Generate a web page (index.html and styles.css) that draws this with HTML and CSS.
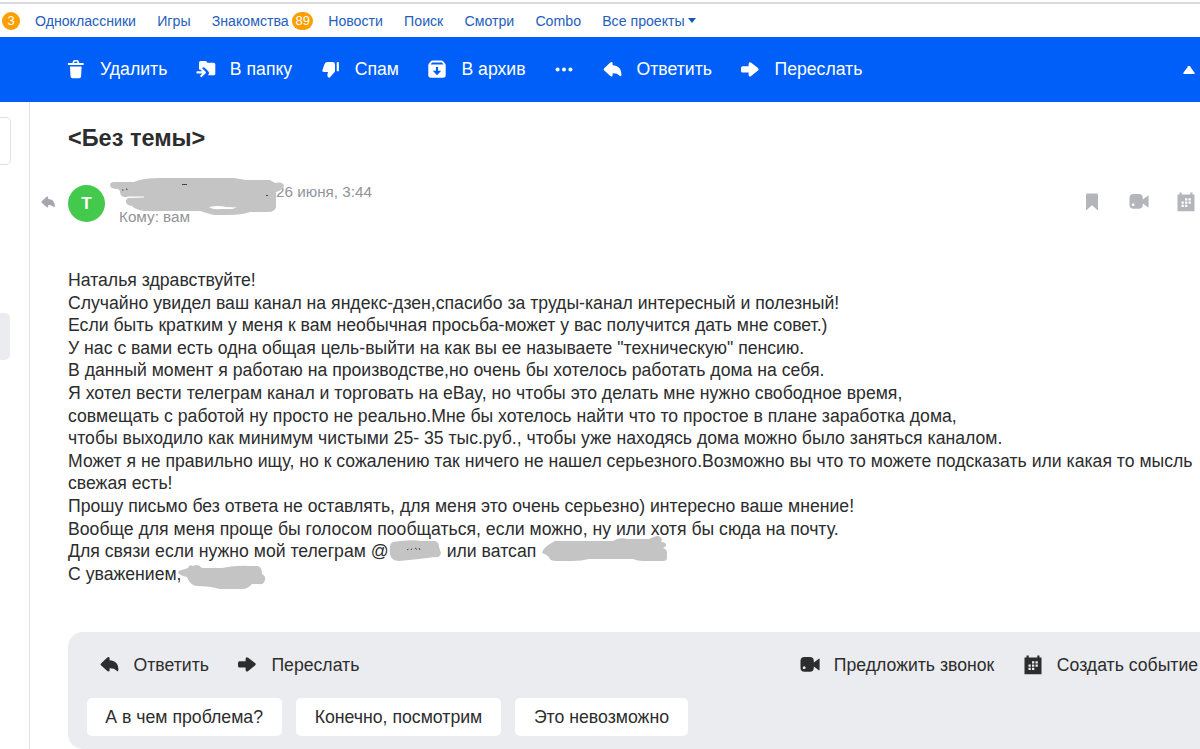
FILE: index.html
```html
<!DOCTYPE html>
<html lang="ru">
<head>
  <meta charset="UTF-8">
  <meta name="viewport" content="width=device-width, initial-scale=1.0">
  <title>Почта</title>
  <link rel="stylesheet" href="styles.css">
</head>
<body>
  <!-- icon set -->
  <svg class="sprite" width="0" height="0">
    <symbol id="i-trash" viewBox="0 0 20 20">
      <path d="M6.500 3Q6.500 0 9 0h1.600q2.500 0 2.500 3h4q.6 0 .6.6v.9q0 .6-.6.600H2.500q-.6 0-.6-.6v-.9q0-.6.600-.6zM8.200 3h3.200q0-1.400-.9-1.400H9.100q-.9 0-.9 1.400zM4 6.500h11.600l-.5 9.800q-.1 1.900-2 1.900H6.500q-1.900 0-2-1.900z" fill-rule="evenodd"/>
    </symbol>
    <symbol id="i-folder" viewBox="0 0 20 20">
      <path d="M3 6V2.800Q3 1 4.800 1h4.500q1 0 1.500.8l.6.900h6.300q1.600 0 1.600 1.600v9.400q0 1.600-1.600 1.600h-6l.8-.9q1.300-1.400 0-2.800L8.700 7.800Q7.500 6.700 6.600 7.600q-.6.800-.1 1.800H3z"/>
      <path d="M1.400 12.400h7M5.300 8.900l3.600 3.500-3.600 3.700" fill="none" stroke="currentColor" stroke-width="2.100" stroke-linecap="round" stroke-linejoin="round"/>
    </symbol>
    <symbol id="i-spam" viewBox="0 0 20 20">
      <path d="M6.500 2h5.200q2.300 0 2.300 2.300v6.400q0 1-.8 1.700l-4.400 5q-.6.600-1.300 0-1.600-1-1.100-3.200l.6-2.200H3q-2.300 0-1.500-2.200l2-5.600Q4.200 2 6.500 2z"/>
      <rect x="15.700" y="2" width="2.200" height="9.300" rx=".9"/>
    </symbol>
    <symbol id="i-archive" viewBox="0 0 20 20">
      <path d="M6 .5h8q1.500 0 2.300 1l1.500 1.700q.9 1 .9 2.300v9.500q0 2.700-2.700 2.700H4q-2.700 0-2.700-2.700V5.500q0-1.300.9-2.300l1.500-1.700Q4.500.5 6 .5zM5.200 2.500L3.600 4.500h12.800l-1.600-2zM8.900 7v3.800H5.800L10 15.200l4.200-4.400h-3.100V7z" fill-rule="evenodd"/>
    </symbol>
    <symbol id="i-dots" viewBox="0 0 20 20">
      <circle cx="3.600" cy="9.500" r="2"/><circle cx="10" cy="9.500" r="2"/><circle cx="16.400" cy="9.500" r="2"/>
    </symbol>
    <symbol id="i-reply" viewBox="0 0 20 20">
      <path d="M1 8.400L7 2.800Q9.300 1.200 9.600 3.200V5.200C15 5.400 18.400 8.600 18.400 14.400Q18.300 17.300 16.700 15.700Q14.400 13.200 9.600 13.300V15.400Q9.300 17.500 7 15.800L1 10.300Q0 9.300 1 8.400z"/>
    </symbol>
    <symbol id="i-forward" viewBox="0 0 20 20">
      <path d="M2.500 6.200H8.600V3.800Q9 1.300 11.200 2.800L18 8.100Q19.500 9.300 18 10.500L11.200 15.900Q9 17.300 8.600 14.900V12.600H2.500Q1 12.600 1 11.100V7.700Q1 6.200 2.500 6.200z"/>
    </symbol>
    <symbol id="i-bookmark" viewBox="0 0 20 20">
      <path d="M5.400 1.500h9.200q1.400 0 1.400 1.400v14.500q0 1-.9.400L10 13.300l-5.100 4.500q-.9.600-.9-.4V2.900q0-1.400 1.400-1.400z"/>
    </symbol>
    <symbol id="i-video" viewBox="0 0 20 20">
      <path d="M4.500 2h5.300q4 0 4 4v1.600L18.500 3.900q1.100-.8 1.100.5v10.200q0 1.300-1.100.5l-4.700-3.700v1.400q0 4-4 4H4.500q-4 0-4-4V6q0-4 4-4zM4.200 11.300a1.400 1.400 0 1 0 .01 0z" fill-rule="evenodd"/>
    </symbol>
    <symbol id="i-calendar" viewBox="0 0 20 20">
      <path d="M3.500.5h2.200v2h8.600v-2h2.200v2h2v16.700h-17V2.500h2zM9 6.200v2.300h2.300V6.200zM12.500 6.200v2.300h2.300V6.200zM5.500 9.500v2.300h2.300V9.500zM9 9.500v2.300h2.300V9.500zM12.500 9.500v2.300h2.300V9.500zM5.500 12.800v2.300h2.300v-2.300zM9 12.800v2.300h2.300v-2.300z" fill-rule="evenodd"/>
    </symbol>
  </svg>

  <nav class="projects">
    <span class="badge">3</span>
    <a class="p-ok">Одноклассники</a>
    <a class="p-games">Игры</a>
    <a class="p-love">Знакомства</a><span class="badge badge-wide">89</span>
    <a class="p-news">Новости</a>
    <a class="p-search">Поиск</a>
    <a class="p-watch">Смотри</a>
    <a class="p-combo">Combo</a>
    <a class="p-all">Все проекты</a><span class="caret"></span>
  </nav>

  <header class="toolbar">
    <a class="action"><svg class="icon"><use href="#i-trash"/></svg><span>Удалить</span></a>
    <a class="action"><svg class="icon"><use href="#i-folder"/></svg><span>В папку</span></a>
    <a class="action"><svg class="icon"><use href="#i-spam"/></svg><span>Спам</span></a>
    <a class="action"><svg class="icon"><use href="#i-archive"/></svg><span>В архив</span></a>
    <a class="action"><svg class="icon"><use href="#i-dots"/></svg></a>
    <a class="action"><svg class="icon"><use href="#i-reply"/></svg><span>Ответить</span></a>
    <a class="action"><svg class="icon"><use href="#i-forward"/></svg><span>Переслать</span></a>
    <svg class="collapse" viewBox="0 0 12 10"><path d="M1 9Q-.3 9 .6 7.600L5.200 1.300Q6 .4 6.800 1.300l4.600 6.300Q12.300 9 11 9z"/></svg>
  </header>

  <div class="layout">
    <aside class="sidebar">
      <div class="compose"></div>
      <div class="folder-active"></div>
    </aside>

    <main class="letter">
      <h1>&lt;Без темы&gt;</h1>

      <div class="letter-head">
        <svg class="icon replied" viewBox="0 0 20 20"><use href="#i-reply"/></svg>
        <div class="avatar">Т</div>
        <div class="sender">
          <div class="date">26 июня, 3:44</div>
          <div class="to">Кому: вам</div>
          <svg class="smudge smudge-name" viewBox="0 0 176 42">
            <path d="M4 5H24Q32 1 50 1H124L136 3H160L165 6Q173 4 174 9Q173 13 166 15V30Q165 35 158 35H140Q132 38 118 38H104Q96 36 90 34H34Q24 32 22 29Q15 28 16 23L19 20H14Q10 19 10 14L8 12Q0 12 0 8Q0 5 4 5z"/>
            <path class="gap" d="M17 19.500H34V20.500L19 21zM99 30Q110 28 116 30L127 30.500L122 32H110Q103 33 99 30z"/>
            <path class="ink" d="M12 13h1.500M16 12h1v1M72 7.500h5M156 18.500h2"/>
          </svg>
        </div>
        <div class="letter-tools">
          <svg class="icon"><use href="#i-bookmark"/></svg>
          <svg class="icon"><use href="#i-video"/></svg>
          <svg class="icon"><use href="#i-calendar"/></svg>
        </div>
      </div>

      <div class="letter-body">
        <p>Наталья здравствуйте!</p>
        <p>Случайно увидел ваш канал на яндекс-дзен,спасибо за труды-канал интересный и полезный!</p>
        <p>Если быть кратким у меня к вам необычная просьба-может у вас получится дать мне совет.)</p>
        <p>У нас с вами есть одна общая цель-выйти на как вы ее называете "техническую" пенсию.</p>
        <p>В данный момент я работаю на производстве,но очень бы хотелось работать дома на себя.</p>
        <p>Я хотел вести телеграм канал и торговать на eBay, но чтобы это делать мне нужно свободное время,</p>
        <p>совмещать с работой ну просто не реально.Мне бы хотелось найти что то простое в плане заработка дома,</p>
        <p>чтобы выходило как минимум чистыми 25- 35 тыс.руб., чтобы уже находясь дома можно было заняться каналом.</p>
        <p>Может я не правильно ищу, но к сожалению так ничего не нашел серьезного.Возможно вы что то можете подсказать или какая то мысль<br>свежая есть!</p>
        <p>Прошу письмо без ответа не оставлять, для меня это очень серьезно) интересно ваше мнение!</p>
        <p>Вообще для меня проще бы голосом пообщаться, если можно, ну или хотя бы сюда на почту.</p>
        <p class="contacts">Для связи если нужно мой телеграм @<span class="hidden-nick"><svg class="smudge smudge-nick" viewBox="0 0 54 22"><path d="M4 2Q22 -1 32 1L46 1Q50 2 50 7L52 13Q51 18 46 17Q38 18 30 19L10 21Q2 21 1 14Q0 3 4 2z"/><path class="ink" d="M18 10l1.500-1M22 10l1-1.500M26 8l2 1.500M30 8l1 2"/></svg></span>или ватсап<span class="hidden-phone"><svg class="smudge smudge-phone" viewBox="0 0 128 28"><path d="M1 17Q2 11 14 5H72Q78 1 86 3H108Q112 1 116 0Q120 0 121 4L120 6Q126 6 125 10L122 12Q126 13 126 17V22Q126 25 122 25H102Q96 25 92 23H48Q40 25 32 25H16Q8 25 8 21Q5 18 1 17z"/></svg></span></p>
        <p class="sign">С уважением,<svg class="smudge smudge-sign" viewBox="0 0 88 26"><path d="M4 6L10 4Q11 0 15 2Q20 -1 24 4L44 4Q58 1 72 2H80Q84 3 84 10Q88 12 87 16Q86 21 81 20H74Q70 25 64 25H42Q32 22 18 22Q12 21 9 13Q0 11 0 8Q1 6 4 6z"/></svg></p>
      </div>

      <section class="reply-box">
        <div class="reply-actions">
          <a class="action"><svg class="icon"><use href="#i-reply"/></svg><span>Ответить</span></a>
          <a class="action"><svg class="icon"><use href="#i-forward"/></svg><span>Переслать</span></a>
          <a class="action offer-call"><svg class="icon"><use href="#i-video"/></svg><span>Предложить звонок</span></a>
          <a class="action"><svg class="icon"><use href="#i-calendar"/></svg><span>Создать событие</span></a>
        </div>
        <div class="quick-replies">
          <button>А в чем проблема?</button>
          <button>Конечно, посмотрим</button>
          <button>Это невозможно</button>
        </div>
      </section>
    </main>
  </div>
</body>
</html>
```
FILE: styles.css
```css
* {
  box-sizing: border-box;
}

body {
  margin: 0;
  height: 749px;
  overflow: hidden;
  background: #fff;
  color: #2c2d2e;
  font-family: "Liberation Sans", Arial, sans-serif;
  font-size: 17.65px;
}

.sprite {
  position: absolute;
}

.icon {
  width: 20px;
  height: 20px;
  flex: none;
  fill: currentColor;
}

/* top projects bar */
.projects {
  display: flex;
  align-items: center;
  height: 37px;
  padding: 2px 0 0 2px;
  border-top: 2px solid #fff;
  box-shadow: inset 0 2px 0 #d9dadf;
  color: #2460bd;
  font-size: 14.15px;
  white-space: nowrap;
}

.projects a {
  margin-right: 21.2px;
}

.projects .badge {
  width: 18px;
  height: 18px;
  margin-right: 15px;
  border-radius: 9px;
  background: #ff9e00;
  color: #fff;
  font-size: 13px;
  line-height: 18px;
  text-align: center;
}

.projects .badge-wide {
  width: 21px;
}

.projects .p-love,
.projects .p-all {
  margin-right: 3.5px;
}

.caret {
  border: 4.5px solid transparent;
  border-top: 5px solid #1857b8;
  border-bottom: 0;
}

/* blue toolbar */
.toolbar {
  display: flex;
  align-items: center;
  gap: 28.5px;
  height: 65px;
  padding: 0 5px 0 66px;
  background: #005ff9;
  color: #fff;
}

.action {
  display: flex;
  align-items: center;
  gap: 14px;
  white-space: nowrap;
}

.collapse {
  width: 12px;
  height: 10px;
  margin-left: auto;
  fill: #fff;
}

.layout {
  display: flex;
  height: 647px;
}

.sidebar {
  flex: none;
  width: 30px;
  border-right: 1px solid #e0e1e5;
}

.compose {
  width: 11px;
  height: 48px;
  margin-top: 15px;
  border: 1px solid #e0e1e5;
  border-left: 0;
  border-radius: 0 5px 5px 0;
}

.folder-active {
  width: 10px;
  height: 47px;
  margin-top: 148px;
  border-radius: 0 5px 5px 0;
  background: #ebecef;
}

.letter {
  width: 1170px;
  padding-left: 38px;
}

h1 {
  margin: 21px 0 0;
  font-size: 23.5px;
  line-height: 30px;
}

.letter-head {
  display: flex;
  align-items: center;
  height: 50px;
  margin: 25px 0 0 -27px;
  color: #919399;
  font-size: 15.25px;
}

.replied {
  width: 15px;
  height: 15px;
  margin: 0 12px 2px 0;
  fill: #a5a7ad;
}

.avatar {
  width: 37px;
  height: 37px;
  border-radius: 50%;
  background: #43c94b;
  color: #fff;
  font-size: 17px;
  font-weight: bold;
  line-height: 37px;
  text-align: center;
}

.sender {
  position: relative;
  margin-left: 14px;
  padding-top: 1px;
  line-height: 25px;
}

.date {
  margin-left: 157px;
}

.letter-tools {
  display: flex;
  gap: 27px;
  margin-left: auto;
  padding: 0 4px 2px 0;
  color: #b4b5bb;
}

/* painted-over fragments */
.smudge {
  position: absolute;
  fill: #c4c4c4;
}

.smudge .gap {
  fill: #fff;
}

.smudge .ink {
  fill: none;
  stroke: #444;
}

.smudge-name {
  left: -9px;
  top: -1px;
  width: 176px;
  height: 42px;
}

.letter-body {
  margin-top: 41px;
  line-height: 22.6px;
  white-space: nowrap;
}

.letter-body p {
  position: relative;
  margin: 0;
}

.hidden-nick,
.hidden-phone {
  position: relative;
  display: inline-block;
  width: 58px;
}

.smudge-nick {
  left: 0;
  top: -17px;
  width: 54px;
  height: 22px;
}

.smudge-phone {
  left: 5px;
  top: -21px;
  width: 128px;
  height: 28px;
}

.smudge-sign {
  left: 110px;
  top: 1px;
  width: 88px;
  height: 26px;
}

.reply-box {
  width: 1160px;
  height: 117px;
  margin-top: 47px;
  padding: 23px 0 0 18.5px;
  border-radius: 15px;
  background: #ebecef;
}

.reply-actions {
  display: flex;
  gap: 28.5px;
  height: 20px;
  padding-left: 13px;
}

.offer-call {
  margin-left: 412px;
}

.quick-replies {
  display: flex;
  gap: 14px;
  margin-top: 23px;
}

.quick-replies button {
  height: 38px;
  padding: 0 18.8px;
  border: 0;
  border-radius: 5px;
  background: #fff;
  color: #2c2d2e;
  font-family: inherit;
  font-size: 17.7px;
}
```
